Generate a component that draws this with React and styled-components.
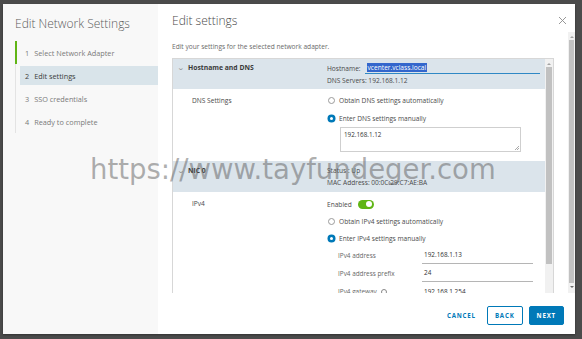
import React from 'react';
import styled, { createGlobalStyle } from 'styled-components';

const GlobalStyle = createGlobalStyle`
  html, body {
    margin: 0;
    padding: 0;
    background: #4b4b4b;
  }
  body {
    font-family: "Open Sans", "Noto Sans", sans-serif;
    color: #565656;
  }
`;

const Stage = styled.div`
  position: relative;
  width: 582px;
  height: 339px;
  padding: 4px 7px 5px 3px;
  box-sizing: border-box;
`;

const Modal = styled.div`
  display: flex;
  height: 330px;
  background: #fff;
  box-shadow: 0 1px 2px rgba(0, 0, 0, 0.35);
`;

const Sidebar = styled.aside`
  width: 155px;
  flex-shrink: 0;
  background: #f8f8f8;
  padding: 11px 0 0 12px;
  box-sizing: border-box;
`;

const SideTitle = styled.h2`
  margin: 0 0 8px;
  font-size: 12px;
  font-weight: 300;
  color: #5d5d5d;
  line-height: 18px;
  white-space: nowrap;
`;

const StepList = styled.ol`
  list-style: none;
  margin: 0;
  padding: 0;
  border-left: 1px solid #e3e3e3;
`;

const Step = styled.li`
  display: flex;
  align-items: center;
  height: 23px;
  margin-left: ${({ done }) => (done ? '-1px' : '0')};
  border-left: ${({ done }) => (done ? '2px solid #60b515' : 'none')};
  padding-left: ${({ done }) => (done ? '3px' : '4px')};
`;

const StepLabel = styled.div`
  display: flex;
  align-items: center;
  gap: 5px;
  flex: 1;
  height: 19px;
  padding-left: 5px;
  font-size: 7.3px;
  color: ${({ active }) => (active ? '#3c3c3c' : '#7a7a7a')};
  background: ${({ active }) => (active ? '#d9e4ea' : 'transparent')};
`;

const Main = styled.section`
  flex: 1;
  display: flex;
  flex-direction: column;
  min-width: 0;
`;

const Header = styled.header`
  display: flex;
  align-items: center;
  justify-content: space-between;
  height: 28px;
  box-sizing: border-box;
  padding: 5px 8px 0 14px;
`;

const Title = styled.h1`
  margin: 0;
  font-size: 12px;
  font-weight: 300;
  color: #4a4a4a;
`;

const CloseBtn = styled.button`
  border: none;
  background: none;
  padding: 0;
  width: 10px;
  height: 10px;
  display: flex;
  align-items: center;
  justify-content: center;
  color: #8c8c8c;
`;

const BodyRow = styled.div`
  display: flex;
  height: 261px;
`;

const Scroller = styled.div`
  flex: 1;
  overflow: hidden;
  padding: 0 14px 0 14px;
`;

const Intro = styled.p`
  margin: 0;
  padding-top: 10px;
  height: 26px;
  box-sizing: border-box;
  font-size: 6.6px;
  color: #6a6a6a;
`;

const Box = styled.div`
  display: flex;
  border: 1px solid #d7d7d7;
  border-bottom: none;
  height: 240px;
  overflow: hidden;
`;

const BoxContent = styled.div`
  flex: 1;
  min-width: 0;
`;

const Section = styled.div`
  display: grid;
  grid-template-columns: 154px 1fr;
  height: ${({ h }) => h}px;
  background: ${({ head }) => (head ? '#dbe4eb' : '#fff')};
  box-sizing: border-box;
  padding-top: ${({ pt }) => pt || 0}px;
`;

const SectionTitle = styled.div`
  display: flex;
  align-items: flex-start;
  gap: 4px;
  padding-left: 5px;
  font-size: 6.8px;
  font-weight: 700;
  color: #3a3a3a;
  line-height: 9px;
`;

const Chevron = styled.span`
  color: #8a8a8a;
  font-weight: 400;
  font-size: 7px;
  transform: scaleX(1.3);
`;

const RowLabel = styled.div`
  padding-left: 19px;
  font-size: 6.6px;
  color: #4a4a4a;
  line-height: 9px;
`;

const Col = styled.div`
  display: flex;
  flex-direction: column;
  gap: ${({ gap }) => gap || 0}px;
`;

const Line = styled.div`
  display: flex;
  align-items: center;
  gap: 4px;
  font-size: 6.6px;
  line-height: 9px;
  color: #4a4a4a;
  height: ${({ h }) => h || 9}px;
`;

const HostInput = styled.div`
  width: 173px;
  height: 10px;
  border-bottom: 1px solid #2f88c5;
  display: flex;
  align-items: flex-start;
  padding-left: 2px;
`;

const Selected = styled.span`
  background: #3366cc;
  color: #fff;
  font-size: 6.6px;
  line-height: 9px;
  padding: 0 1px;
`;

const Radio = styled.span`
  width: 7px;
  height: 7px;
  border-radius: 50%;
  box-sizing: border-box;
  flex-shrink: 0;
  margin-left: 1px;
  border: ${({ on }) => (on ? '2px solid #0079b8' : '1px solid #9a9a9a')};
  background: ${({ on }) => (on ? '#fff' : 'transparent')};
  box-shadow: ${({ on }) => (on ? '0 0 0 0.5px #0079b8' : 'none')};
`;

const TextArea = styled.div`
  position: relative;
  margin-left: 13px;
  width: 181px;
  height: 25px;
  border: 1px solid #cfcfcf;
  box-sizing: border-box;
  padding: 2px 3px;
  font-size: 6.3px;
  color: #333;
`;

const Grip = styled.span`
  position: absolute;
  right: 1px;
  bottom: 1px;
  width: 4px;
  height: 4px;
  background: linear-gradient(135deg, transparent 45%, #aaa 50%, transparent 60%, transparent 70%, #aaa 75%, transparent 85%);
`;

const Toggle = styled.span`
  position: relative;
  width: 16px;
  height: 9px;
  border-radius: 5px;
  background: #60b515;
  margin-left: 2px;
  &::after {
    content: '';
    position: absolute;
    right: 1.5px;
    top: 1.5px;
    width: 6px;
    height: 6px;
    border-radius: 50%;
    background: #fff;
  }
`;

const Field = styled.div`
  display: grid;
  grid-template-columns: 84px 111px;
  align-items: end;
  margin-left: 11px;
  height: ${({ h }) => h || 17}px;
  font-size: 6.4px;
`;

const FieldLabel = styled.span`
  color: #666;
  padding-bottom: 4px;
  display: flex;
  align-items: center;
  gap: 4px;
`;

const FieldValue = styled.span`
  color: #333;
  padding: 0 0 4px 2px;
  border-bottom: ${({ line }) => (line ? '1px solid #b5b5b5' : 'none')};
`;

const Info = styled.span`
  width: 6px;
  height: 6px;
  border: 1px solid #888;
  border-radius: 50%;
  box-sizing: border-box;
`;

const ScrollBar = styled.div`
  width: ${({ w }) => w}px;
  flex-shrink: 0;
  display: flex;
  flex-direction: column;
  background: #f1f1f1;
  padding-top: 1px;
`;

const Arrow = styled.div`
  height: 7px;
  display: flex;
  align-items: center;
  justify-content: center;
  &::before {
    content: '';
    border-left: 2px solid transparent;
    border-right: 2px solid transparent;
    ${({ down }) => (down ? 'border-top: 2px solid #6a6a6a;' : 'border-bottom: 2px solid #a3a3a3;')}
  }
`;

const Thumb = styled.div`
  margin: 0 1px;
  height: ${({ h }) => h}px;
  background: #c1c1c1;
`;

const Spacer = styled.div`
  flex: 1;
`;

const Footer = styled.footer`
  flex: 1;
  display: flex;
  align-items: center;
  justify-content: flex-end;
  gap: 6px;
  padding: 4px 11px 0 0;
`;

const Btn = styled.button`
  height: 19px;
  padding: 0 ${({ pad }) => pad || 7}px;
  margin-left: ${({ ghost }) => (ghost ? '0' : '0')};
  border-radius: 2px;
  font-family: "Open Sans", "Noto Sans", sans-serif;
  font-size: 6.2px;
  font-weight: 700;
  letter-spacing: 0.8px;
  cursor: pointer;
  color: ${({ primary }) => (primary ? '#fff' : '#0079b8')};
  background: ${({ primary }) => (primary ? '#0079b8' : '#fff')};
  border: 1px solid ${({ ghost }) => (ghost ? 'transparent' : '#0079b8')};
`;

const Watermark = styled.div`
  position: absolute;
  left: 90px;
  top: 151px;
  font-family: "DejaVu Sans", sans-serif;
  font-size: 27.5px;
  line-height: 36px;
  color: rgba(95, 95, 95, 0.5);
  pointer-events: none;
  white-space: nowrap;
`;

const steps = ['Select Network Adapter', 'Edit settings', 'SSO credentials', 'Ready to complete'];

export default function App() {
  return (
    <>
      <GlobalStyle />
      <Stage>
        <Modal>
          <Sidebar>
            <SideTitle>Edit Network Settings</SideTitle>
            <StepList>
              {steps.map((s, i) => (
                <Step key={s} done={i === 0}>
                  <StepLabel active={i === 1}>
                    <span>{i + 1}</span>
                    <span>{s}</span>
                  </StepLabel>
                </Step>
              ))}
            </StepList>
          </Sidebar>
          <Main>
            <Header>
              <Title>Edit settings</Title>
              <CloseBtn aria-label="close">
                <svg width="9" height="9" viewBox="0 0 9 9">
                  <path d="M1 1L8 8M8 1L1 8" stroke="#8c8c8c" strokeWidth="0.9" />
                </svg>
              </CloseBtn>
            </Header>
            <BodyRow>
              <Scroller>
                <Intro>Edit your settings for the selected network adapter.</Intro>
                <Box>
                  <BoxContent>
                    <Section head h={30} pt={4}>
                      <SectionTitle>
                        <Chevron>⌄</Chevron>
                        <span>Hostname and DNS</span>
                      </SectionTitle>
                      <Col gap={3}>
                        <Line h={10}>
                          <span>Hostname:</span>
                          <HostInput>
                            <Selected>vcenter.vclass.local</Selected>
                          </HostInput>
                        </Line>
                        <Line>DNS Servers: 192.168.1.12</Line>
                      </Col>
                    </Section>
                    <Section h={72} pt={7}>
                      <RowLabel>DNS Settings</RowLabel>
                      <Col gap={9}>
                        <Line>
                          <Radio />
                          <span>Obtain DNS settings automatically</span>
                        </Line>
                        <Col gap={4}>
                          <Line>
                            <Radio on />
                            <span>Enter DNS settings manually</span>
                          </Line>
                          <TextArea>
                            192.168.1.12
                            <Grip />
                          </TextArea>
                        </Col>
                      </Col>
                    </Section>
                    <Section head h={31} pt={5}>
                      <SectionTitle>
                        <Chevron>⌄</Chevron>
                        <span>NIC 0</span>
                      </SectionTitle>
                      <Col gap={3}>
                        <Line>Status : Up</Line>
                        <Line>MAC Address: 00:0C:29:C7:AE:BA</Line>
                      </Col>
                    </Section>
                    <Section h={120} pt={7}>
                      <RowLabel>IPv4</RowLabel>
                      <Col>
                        <Col gap={8}>
                          <Line h={10}>
                            <span>Enabled</span>
                            <Toggle />
                          </Line>
                          <Line>
                            <Radio />
                            <span>Obtain IPv4 settings automatically</span>
                          </Line>
                          <Line>
                            <Radio on />
                            <span>Enter IPv4 settings manually</span>
                          </Line>
                        </Col>
                        <Field h={21}>
                          <FieldLabel>IPv4 address</FieldLabel>
                          <FieldValue line>192.168.1.13</FieldValue>
                        </Field>
                        <Field h={18}>
                          <FieldLabel>IPv4 address prefix</FieldLabel>
                          <FieldValue line>24</FieldValue>
                        </Field>
                        <Field h={18}>
                          <FieldLabel>
                            IPv4 gateway <Info />
                          </FieldLabel>
                          <FieldValue>192.168.1.254</FieldValue>
                        </Field>
                      </Col>
                    </Section>
                  </BoxContent>
                  <ScrollBar w={8}>
                    <Arrow />
                    <Thumb h={197} />
                    <Spacer />
                  </ScrollBar>
                </Box>
              </Scroller>
              <ScrollBar w={7}>
                <Arrow />
                <Thumb h={243} />
                <Arrow down />
              </ScrollBar>
            </BodyRow>
            <Footer>
              <Btn ghost pad={4}>CANCEL</Btn>
              <Btn>BACK</Btn>
              <Btn primary>NEXT</Btn>
            </Footer>
          </Main>
        </Modal>
        <Watermark>https://www.tayfundeger.com</Watermark>
      </Stage>
    </>
  );
}
